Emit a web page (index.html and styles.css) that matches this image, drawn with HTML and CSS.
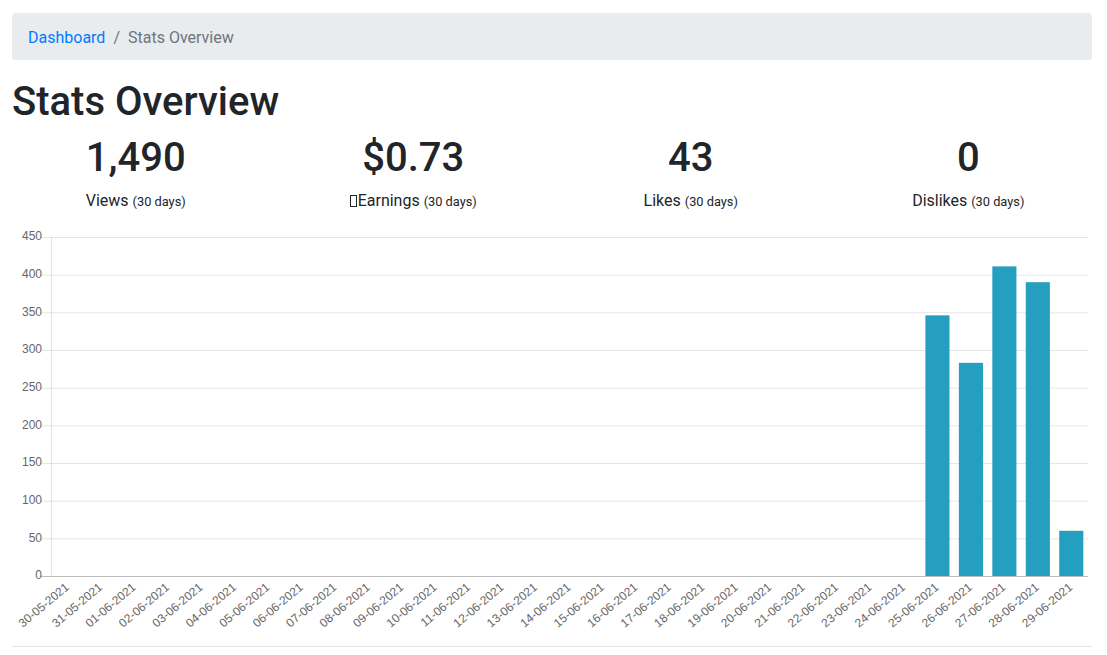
FILE: index.html
```html
<!DOCTYPE html>
<html lang="en">
<head>
<meta charset="utf-8">
<title>Stats Overview</title>
<link rel="stylesheet" href="styles.css">
</head>
<body>
<div class="page">
  <nav class="breadcrumb">
    <a class="crumb-link" href="#">Dashboard</a>
    <span class="crumb-sep">/</span>
    <span class="crumb-active">Stats Overview</span>
  </nav>
  <h1 class="title">Stats Overview</h1>
  <div class="stats">
    <div class="stat">
      <div class="stat-num">1,490</div>
      <p class="stat-label">Views <small>(30 days)</small></p>
    </div>
    <div class="stat">
      <div class="stat-num">$0.73</div>
      <p class="stat-label"><span class="tofu"></span>Earnings <small>(30 days)</small></p>
    </div>
    <div class="stat">
      <div class="stat-num">43</div>
      <p class="stat-label">Likes <small>(30 days)</small></p>
    </div>
    <div class="stat">
      <div class="stat-num">0</div>
      <p class="stat-label">Dislikes <small>(30 days)</small></p>
    </div>
  </div>
  <svg class="chart" width="1080" height="401" viewBox="0 0 1080 401">
    <g class="grid">
      <line x1="29" y1="8.5" x2="1076" y2="8.5"/>
      <line x1="29" y1="46.17" x2="1076" y2="46.17"/>
      <line x1="29" y1="83.83" x2="1076" y2="83.83"/>
      <line x1="29" y1="121.5" x2="1076" y2="121.5"/>
      <line x1="29" y1="159.17" x2="1076" y2="159.17"/>
      <line x1="29" y1="196.83" x2="1076" y2="196.83"/>
      <line x1="29" y1="234.5" x2="1076" y2="234.5"/>
      <line x1="29" y1="272.17" x2="1076" y2="272.17"/>
      <line x1="29" y1="309.83" x2="1076" y2="309.83"/>
      <line x1="39.5" y1="8" x2="39.5" y2="347"/>
    </g>
    <line class="zero" x1="29" y1="347.5" x2="1076" y2="347.5"/>
    <g class="ylabels">
      <text x="30" y="8">450</text>
      <text x="30" y="45.67">400</text>
      <text x="30" y="83.33">350</text>
      <text x="30" y="121">300</text>
      <text x="30" y="158.67">250</text>
      <text x="30" y="196.33">200</text>
      <text x="30" y="234">150</text>
      <text x="30" y="271.67">100</text>
      <text x="30" y="309.33">50</text>
      <text x="30" y="347">0</text>
    </g>
    <g class="bars">
      <rect x="913.4" y="86.35" width="24.1" height="260.65"/>
      <rect x="946.87" y="133.81" width="24.1" height="213.19"/>
      <rect x="980.32" y="37.38" width="24.1" height="309.62"/>
      <rect x="1013.77" y="53.2" width="24.1" height="293.8"/>
      <rect x="1047.23" y="301.8" width="24.1" height="45.2"/>
    </g>
    <g class="xlabels">
      <text x="55.73" y="357" transform="rotate(-40 55.73 357)">30-05-2021</text>
      <text x="89.18" y="357" transform="rotate(-40 89.18 357)">31-05-2021</text>
      <text x="122.63" y="357" transform="rotate(-40 122.63 357)">01-06-2021</text>
      <text x="156.08" y="357" transform="rotate(-40 156.08 357)">02-06-2021</text>
      <text x="189.53" y="357" transform="rotate(-40 189.53 357)">03-06-2021</text>
      <text x="222.99" y="357" transform="rotate(-40 222.99 357)">04-06-2021</text>
      <text x="256.44" y="357" transform="rotate(-40 256.44 357)">05-06-2021</text>
      <text x="289.89" y="357" transform="rotate(-40 289.89 357)">06-06-2021</text>
      <text x="323.34" y="357" transform="rotate(-40 323.34 357)">07-06-2021</text>
      <text x="356.79" y="357" transform="rotate(-40 356.79 357)">08-06-2021</text>
      <text x="390.24" y="357" transform="rotate(-40 390.24 357)">09-06-2021</text>
      <text x="423.69" y="357" transform="rotate(-40 423.69 357)">10-06-2021</text>
      <text x="457.15" y="357" transform="rotate(-40 457.15 357)">11-06-2021</text>
      <text x="490.6" y="357" transform="rotate(-40 490.6 357)">12-06-2021</text>
      <text x="524.05" y="357" transform="rotate(-40 524.05 357)">13-06-2021</text>
      <text x="557.5" y="357" transform="rotate(-40 557.5 357)">14-06-2021</text>
      <text x="590.95" y="357" transform="rotate(-40 590.95 357)">15-06-2021</text>
      <text x="624.4" y="357" transform="rotate(-40 624.4 357)">16-06-2021</text>
      <text x="657.85" y="357" transform="rotate(-40 657.85 357)">17-06-2021</text>
      <text x="691.31" y="357" transform="rotate(-40 691.31 357)">18-06-2021</text>
      <text x="724.76" y="357" transform="rotate(-40 724.76 357)">19-06-2021</text>
      <text x="758.21" y="357" transform="rotate(-40 758.21 357)">20-06-2021</text>
      <text x="791.66" y="357" transform="rotate(-40 791.66 357)">21-06-2021</text>
      <text x="825.11" y="357" transform="rotate(-40 825.11 357)">22-06-2021</text>
      <text x="858.56" y="357" transform="rotate(-40 858.56 357)">23-06-2021</text>
      <text x="892.02" y="357" transform="rotate(-40 892.02 357)">24-06-2021</text>
      <text x="925.47" y="357" transform="rotate(-40 925.47 357)">25-06-2021</text>
      <text x="958.92" y="357" transform="rotate(-40 958.92 357)">26-06-2021</text>
      <text x="992.37" y="357" transform="rotate(-40 992.37 357)">27-06-2021</text>
      <text x="1025.82" y="357" transform="rotate(-40 1025.82 357)">28-06-2021</text>
      <text x="1059.28" y="357" transform="rotate(-40 1059.28 357)">29-06-2021</text>
    </g>
  </svg>
  <hr class="rule">
</div>
</body>
</html>
```

FILE: styles.css
```css
* { box-sizing: border-box; }

body {
  margin: 0;
  font-family: Roboto, "Open Sans", sans-serif;
  font-size: 16px;
  line-height: 24px;
  color: #212529;
  background: #fff;
}

.page {
  padding: 13px 15px 0 12px;
}

.breadcrumb {
  display: flex;
  align-items: center;
  background: #e9ecef;
  border-radius: 4px;
  padding: 13px 16px 10px;
  margin-bottom: 16px;
}

.crumb-link {
  color: #007bff;
  text-decoration: none;
}

.crumb-sep {
  color: #6c757d;
  padding: 0 8px;
}

.crumb-active {
  color: #6c757d;
}

.title {
  margin: 0 0 6px;
  padding-top: 2px;
  font-size: 40px;
  line-height: 48px;
  font-weight: 500;
}

.stats {
  display: grid;
  grid-template-columns: repeat(4, 1fr);
  margin: 0 -15px;
}

.stat {
  padding: 0 15px;
  text-align: center;
}

.stat-num {
  padding-top: 2px;
  font-size: 40px;
  line-height: 48px;
  font-weight: 500;
  margin-bottom: 7px;
}

.stat-label {
  margin: 0 0 15px;
}

.stat-label small {
  font-size: 12.8px;
}

.tofu {
  display: inline-block;
  width: 7px;
  height: 12px;
  border: 1px solid #212529;
  margin-right: 1px;
  vertical-align: -1px;
}

.chart {
  display: block;
  font-family: "Liberation Sans", Arial, sans-serif;
  font-size: 12px;
}

.grid line {
  stroke: rgba(0, 0, 0, 0.1);
  stroke-width: 1;
}

.zero {
  stroke: rgba(0, 0, 0, 0.25);
  stroke-width: 1;
}

.ylabels text {
  fill: #666;
  text-anchor: end;
  dominant-baseline: middle;
}

.xlabels text {
  fill: #666;
  text-anchor: end;
  dominant-baseline: middle;
}

.bars rect {
  fill: #249fc0;
}

.rule {
  margin: 16px 0 0;
  border: 0;
  border-top: 1px solid rgba(0, 0, 0, 0.1);
}
```
